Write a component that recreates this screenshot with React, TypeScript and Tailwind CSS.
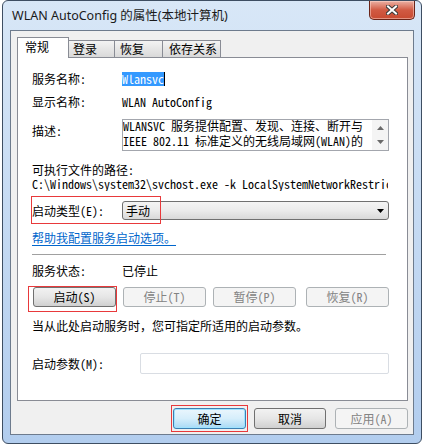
import React from "react";

type BtnProps = {
  label: string;
  width: string;
  disabled?: boolean;
  primary?: boolean;
  className?: string;
};

function WinButton({ label, width, disabled, primary, className }: BtnProps) {
  let look =
    "border-[#707070] bg-gradient-to-b from-[#f2f2f2] via-[#e6e6e6] to-[#d0d0d0] text-black";
  if (disabled) look = "border-[#adb2b5] bg-[#f4f4f4] text-[#838383]";
  if (primary)
    look =
      "border-[#3c7fb1] bg-gradient-to-b from-[#eaf6fd] via-[#d6eefb] to-[#a9daf5] text-black shadow-[inset_0_0_0_1px_#9fe3ff]";
  return (
    <div
      className={`${width} h-full flex items-center justify-center rounded-[3px] border ${look} ${className ?? ""}`}
    >
      {label}
    </div>
  );
}

function Row({ label, children, labelW = "w-[90px]" }: { label: string; children: React.ReactNode; labelW?: string }) {
  return (
    <div className="flex h-[14px] items-center">
      <div className={`${labelW} shrink-0`}>{label}</div>
      {children}
    </div>
  );
}

export default function App() {
  return (
    <div className="w-[424px] h-[444px] bg-white text-[12px] leading-[14px] text-black font-['Noto_Sans_Mono_CJK_SC','Noto_Sans_CJK_SC',monospace]">
      <div className="relative ml-[2px] w-[420px] h-[444px] flex flex-col rounded-[6px] border border-[#3e4e62] bg-gradient-to-b from-[#d8e7f7] to-[#b2cdee] px-[7px] pb-[8px]">
        {/* title bar */}
        <div className="h-[29px] flex items-center pl-[2px] text-[12.5px] text-[#1a1a1a] font-['Noto_Sans','Noto_Sans_CJK_SC',sans-serif]">
          WLAN AutoConfig 的属性(本地计算机)
        </div>

        {/* close button */}
        <div className="absolute top-0 right-[6px] w-[46px] h-[19px] flex items-center justify-center rounded-b-[5px] border border-t-0 border-[#6a2418] bg-gradient-to-b from-[#eab0a4] via-[#d15a43] to-[#c84a31] shadow-[inset_0_0_0_1px_rgba(255,220,210,0.5)]">
          <svg width="12" height="10" viewBox="0 0 12 10">
            <path d="M2 1.5 L10 8.5 M10 1.5 L2 8.5" stroke="#3a3a3a" strokeWidth="4" strokeLinecap="square" />
            <path d="M2 1.5 L10 8.5 M10 1.5 L2 8.5" stroke="#ffffff" strokeWidth="2" strokeLinecap="square" />
          </svg>
        </div>

        {/* client area */}
        <div className="flex-1 flex flex-col border border-[#6d7b8d] bg-[#f0f0f0] pl-[6px] pr-[5px]">
          {/* tabs */}
          <div className="mt-[6px] h-[20px] flex items-end">
            <div className="relative z-10 -mb-px h-[21px] w-[52px] border border-b-0 border-[#898c95] bg-white pl-[7px] pt-[2px]">
              常规
            </div>
            <div className="h-[17px] w-[46px] border border-l-0 border-b-0 border-[#898c95] bg-gradient-to-b from-[#f3f3f3] to-[#d9d9d9] pl-[4px] pt-px">
              登录
            </div>
            <div className="h-[17px] w-[48px] border border-l-0 border-b-0 border-[#898c95] bg-gradient-to-b from-[#f3f3f3] to-[#d9d9d9] pl-[5px] pt-px">
              恢复
            </div>
            <div className="h-[17px] w-[58px] border border-l-0 border-b-0 border-[#898c95] bg-gradient-to-b from-[#f3f3f3] to-[#d9d9d9] pl-[6px] pt-px">
              依存关系
            </div>
          </div>

          {/* tab panel */}
          <div className="h-[344px] flex flex-col border border-[#898c95] bg-white pl-[14px]">
            <div className="mt-[14px]">
              <Row label="服务名称:">
                <span className="bg-[#3399ff] text-white border-r border-black">Wlansvc</span>
              </Row>
            </div>
            <div className="mt-[9px]">
              <Row label="显示名称:">
                <span>WLAN AutoConfig</span>
              </Row>
            </div>

            <div className="mt-[10px] flex">
              <div className="w-[90px] shrink-0 pt-[5px]">描述:</div>
              <div className="w-[267px] h-[32px] flex border border-[#a3a6ad] bg-white">
                <div className="flex-1 overflow-hidden whitespace-nowrap leading-[15px] -mt-[2px]">
                  <div>WLANSVC 服务提供配置、发现、连接、断开与</div>
                  <div>IEEE 802.11 标准定义的无线局域网(WLAN)的</div>
                </div>
                <div className="w-[16px] flex flex-col items-center justify-between bg-[#f4f4f4] py-[6px]">
                  <svg width="7" height="4" viewBox="0 0 7 4">
                    <path d="M0 4 L3.5 0 L7 4 Z" fill="#6a6a6a" />
                  </svg>
                  <svg width="7" height="4" viewBox="0 0 7 4">
                    <path d="M0 0 L7 0 L3.5 4 Z" fill="#6a6a6a" />
                  </svg>
                </div>
              </div>
            </div>

            <div className="mt-[12px] h-[14px]">可执行文件的路径:</div>
            <div className="h-[14px] w-[356px] overflow-hidden whitespace-nowrap">
              C:\Windows\system32\svchost.exe -k LocalSystemNetworkRestricted
            </div>

            <div className="relative mt-[10px] h-[19px] flex items-center">
              <div className="w-[90px] shrink-0">启动类型(E):</div>
              <div className="w-[267px] h-full flex items-center justify-between rounded-[3px] border border-[#707070] bg-gradient-to-b from-[#f4f4f4] via-[#ebebeb] to-[#d9d9d9] pl-[3px] pr-[4px]">
                <span>手动</span>
                <svg width="7" height="4" viewBox="0 0 7 4">
                  <path d="M0 0 L7 0 L3.5 4 Z" fill="#000" />
                </svg>
              </div>
              <div className="absolute -left-px -top-[5px] w-[130px] h-[28px] border border-[#e8393b]" />
            </div>

            <div className="mt-[11px] h-[14px] text-[#0066cc] underline underline-offset-2">帮助我配置服务启动选项。</div>

            <div className="mt-[9px] h-px w-[354px] bg-[#a0a0a0]" />

            <div className="mt-[9px]">
              <Row label="服务状态:">
                <span>已停止</span>
              </Row>
            </div>

            <div className="mt-[9px] h-[20px] flex pl-px">
              <div className="relative h-full">
                <WinButton label="启动(S)" width="w-[83px]" />
                <div className="absolute -left-[5px] -top-px w-[89px] h-[26px] border border-[#e8393b]" />
              </div>
              <WinButton label="停止(T)" width="w-[83px]" disabled className="ml-[7px]" />
              <WinButton label="暂停(P)" width="w-[83px]" disabled className="ml-[7px]" />
              <WinButton label="恢复(R)" width="w-[83px]" disabled className="ml-[10px]" />
            </div>

            <div className="mt-[12px] h-[14px]">当从此处启动服务时，您可指定所适用的启动参数。</div>

            <div className="mt-[20px] h-[21px] flex items-center">
              <div className="w-[108px] shrink-0">启动参数(M):</div>
              <div className="w-[249px] h-full rounded-[2px] border border-[#d9dde3] bg-white" />
            </div>
          </div>

          {/* dialog buttons */}
          <div className="mt-[7px] h-[21px] flex justify-end">
            <div className="relative h-full">
              <WinButton label="确定" width="w-[73px]" primary />
              <div className="absolute -left-[2px] -top-[3px] w-[77px] h-[27px] border border-[#e8393b]" />
            </div>
            <WinButton label="取消" width="w-[72px]" className="ml-[8px]" />
            <WinButton label="应用(A)" width="w-[73px]" disabled className="ml-[9px]" />
          </div>
        </div>
      </div>
    </div>
  );
}
